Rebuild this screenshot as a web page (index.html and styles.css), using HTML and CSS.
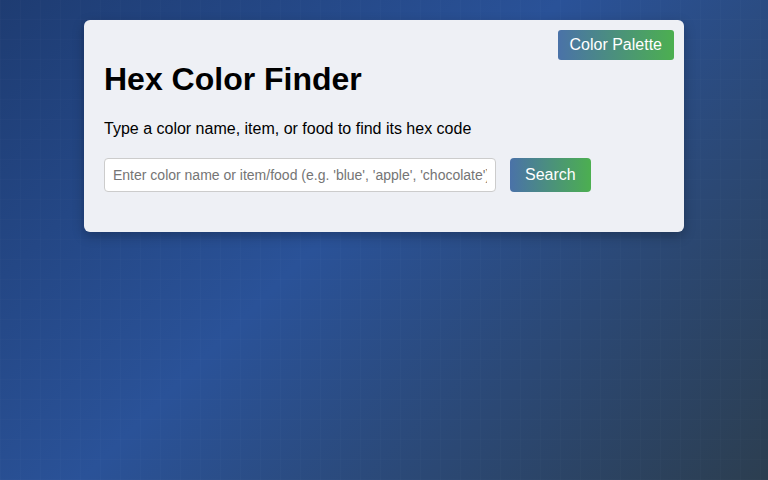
FILE: index.html
```html
<!DOCTYPE html>
<html>
	<head>
		<meta charset="utf-8">
		<title>Hex Color Finder</title>
		<link rel="stylesheet" href="styles.css">
	</head>
	<body>
		<div class="finder">
			<a href="javascript:void(0)" class="palette-btn">Color Palette</a>
			<h1>Hex Color Finder</h1>
			<p>Type a color name, item, or food to find its hex code</p>
			<div class="search-row">
				<input type="text" class="search-input" placeholder="Enter color name or item/food (e.g. 'blue', 'apple', 'chocolate')"><button class="search-btn">Search</button>
			</div>
		</div>
	</body>
</html>
```

FILE: styles.css
```css
*{box-sizing:border-box;}
html,body{margin:0;padding:0;}
body{min-height:100vh;font-family:"Liberation Sans",Arial,sans-serif;color:#000;
background:
linear-gradient(90deg,rgba(255,255,255,0.015) 1px,transparent 1px) 0 0/20px 20px,
linear-gradient(0deg,rgba(255,255,255,0.01) 1px,transparent 1px) 0 0/20px 20px,
linear-gradient(135deg,#1e3c72 0%,#2a5298 45%,#2c3e50 100%);
overflow:hidden;}
a{text-decoration:none;}

.finder{position:relative;width:600px;margin:20px auto;padding:20px;background:#eef0f5;border-radius:6px;
box-shadow:0 4px 12px rgba(0,0,0,0.25);}
.finder h1{font-size:32px;margin:21px 0 22px;line-height:37px;}
.finder p{font-size:16px;margin:0;line-height:18px;}

.palette-btn{position:absolute;top:10px;right:10px;display:block;padding:6px 12px;font-size:16px;line-height:18px;color:#fff;
border-radius:3px;background:linear-gradient(90deg,#4a72a8,#4caf50);}

.search-row{margin:20px 0;height:34px;font-size:0;}
.search-input{width:70%;height:34px;padding:8px;font-size:14px;font-family:"Liberation Sans",Arial,sans-serif;
border:1px solid #ccc;border-radius:4px;background:#fff;vertical-align:top;}
.search-input::placeholder{color:#757575;}
.search-btn{margin-left:14px;height:34px;padding:8px 15px;font-size:16px;line-height:18px;font-family:"Liberation Sans",Arial,sans-serif;
color:#fff;border:0;border-radius:4px;background:linear-gradient(90deg,#4a72a8,#4caf50);vertical-align:top;cursor:pointer;}
```
